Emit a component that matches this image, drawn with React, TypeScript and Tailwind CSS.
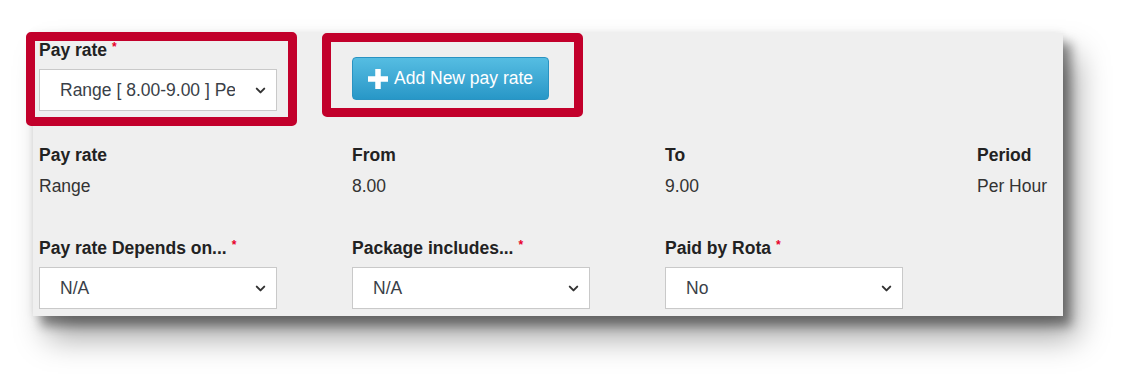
import { ChevronDown } from "lucide-react";

const FONT = { fontFamily: '"Liberation Sans", Arial, sans-serif' };

function Req() {
  return <span className="ml-[5px] align-top text-[12px] leading-none text-[#e8002a]">*</span>;
}

function Label({ children, req = true }: { children: React.ReactNode; req?: boolean }) {
  return (
    <div className="h-[18px] text-[17.5px] font-bold leading-[18px] text-[#222]">
      {children}
      {req && <Req />}
    </div>
  );
}

function Select({ value }: { value: string }) {
  return (
    <div className="flex h-[42px] w-[238px] items-center border border-[#c9c9c9] bg-white pl-[20px] pr-[8px]">
      <span className="mr-[18px] flex-1 overflow-hidden whitespace-nowrap text-[17.5px] text-[#3a3f48]">
        {value}
      </span>
      <ChevronDown size={15} strokeWidth={3.2} className="shrink-0 text-[#333]" />
    </div>
  );
}

// Read-only summary of the chosen pay rate: bold heading over the plain value.
function Summary({ title, value }: { title: string; value: string }) {
  return (
    <div>
      <div className="text-[17.5px] font-bold leading-[18px] text-[#222]">{title}</div>
      <div className="mt-[13px] text-[17.5px] leading-[18px] text-[#333]">{value}</div>
    </div>
  );
}

export default function App() {
  return (
    <div className="relative h-[383px] w-[1129px] overflow-hidden bg-white" style={FONT}>
      <div className="ml-[33px] mt-[33px] h-[283px] w-[1030px] bg-[#efefef] pl-[6px] pt-[8px] shadow-[0_0_8px_rgba(0,0,0,0.08),8px_10px_10px_rgba(0,0,0,0.4),14px_22px_30px_rgba(0,0,0,0.35)]">
        <div className="grid grid-cols-[313px_313px]">
          <div>
            <Label>Pay rate</Label>
            <div className="mt-[10px]">
              <Select value="Range [ 8.00-9.00 ] Per Hour" />
            </div>
          </div>
          <div className="pt-[16px]">
            <button className="flex h-[43px] w-[197px] items-center gap-[6px] rounded-[4px] border border-[#2a93c2] bg-gradient-to-b from-[#55bde2] to-[#2797c7] pl-[15px] text-[17.5px] text-white">
              <svg width="20" height="20" viewBox="0 0 20 20">
                <path d="M10 1.5v17M1.5 10h17" stroke="white" strokeWidth="5.5" strokeLinecap="square" />
              </svg>
              Add New pay rate
            </button>
          </div>
        </div>

        <div className="mt-[35px] grid grid-cols-[313px_313px_312px_200px]">
          <Summary title="Pay rate" value="Range" />
          <Summary title="From" value="8.00" />
          <Summary title="To" value="9.00" />
          <Summary title="Period" value="Per Hour" />
        </div>

        <div className="mt-[44px] grid grid-cols-[313px_313px_313px]">
          <div>
            <Label>Pay rate Depends on...</Label>
            <div className="mt-[10px]">
              <Select value="N/A" />
            </div>
          </div>
          <div>
            <Label>Package includes...</Label>
            <div className="mt-[10px]">
              <Select value="N/A" />
            </div>
          </div>
          <div>
            <Label>Paid by Rota</Label>
            <div className="mt-[10px]">
              <Select value="No" />
            </div>
          </div>
        </div>
      </div>

      {/* annotation frames drawn over the form */}
      <div className="absolute left-[26px] top-[32px] h-[94px] w-[271px] rounded-[5px] border-[9px] border-[#c2002b]" />
      <div className="absolute left-[322px] top-[33px] h-[84px] w-[261px] rounded-[5px] border-[9px] border-[#c2002b]" />
    </div>
  );
}
